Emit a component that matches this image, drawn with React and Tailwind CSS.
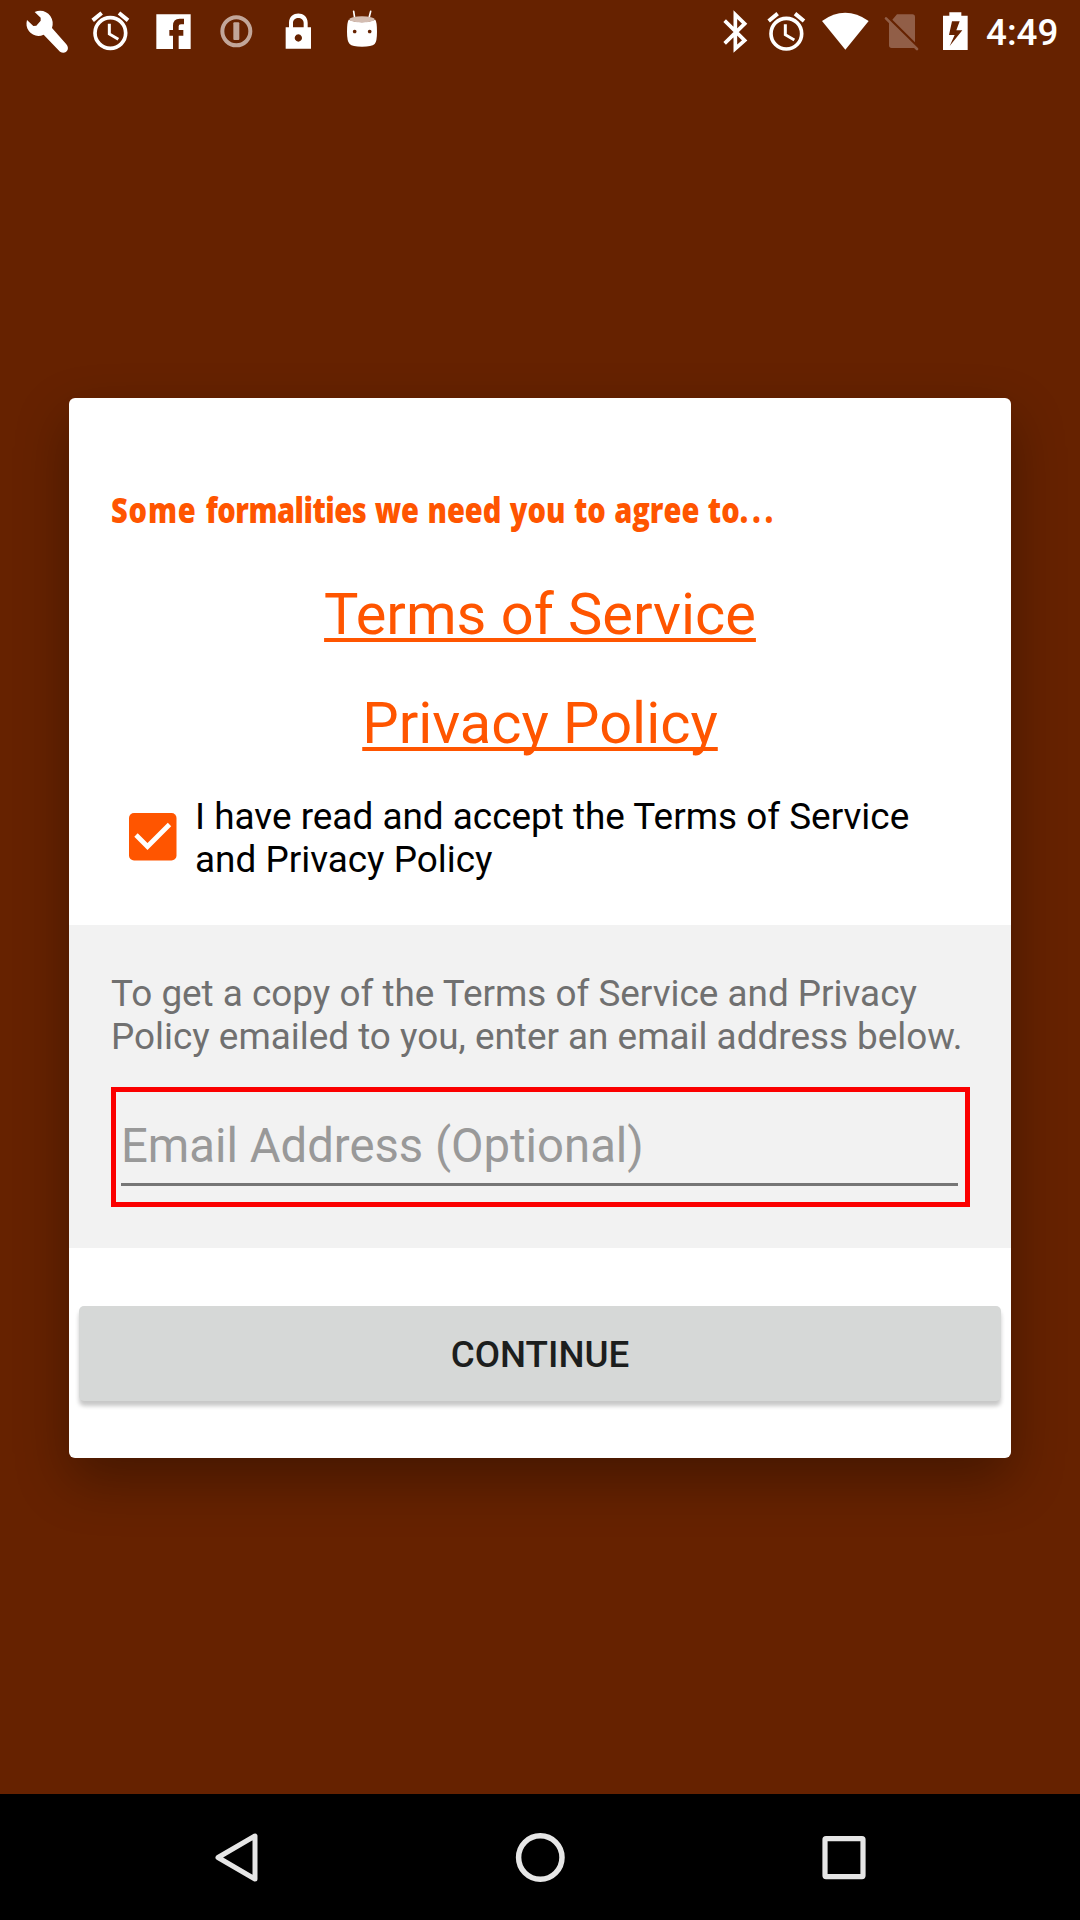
function Slot({ x, w, children }) {
  return (
    <svg width={w} height="64" viewBox={`${x} 0 ${w * 3} 192`} fill="#fff">
      {children}
    </svg>
  );
}

function Alarm({ cx, cy }) {
  return (
    <g transform={`translate(${cx} ${cy})`} fill="none" stroke="#fff">
      <circle r="46" strokeWidth="11" />
      <path d="M-3 -28V3L24 19" strokeWidth="9" />
      <path d="M-53 -38L-26 -60M53 -38L26 -60" strokeWidth="12" />
    </g>
  );
}

function StatusBar() {
  return (
    <header className="flex h-16 w-full justify-between">
      <div className="flex pl-5">
        <Slot x={60} w={60}>
          <path d="M104 36C122 28 141 34 151 48C159 60 160 72 156 84L199 133C212 148 196 166 180 155L131 104C114 112 96 106 87 94C79 83 78 72 81 60L100 78L109 77L122 62L122 53Z" />
        </Slot>
        <Slot x={240} w={60}>
          <Alarm cx={331} cy={99} />
        </Slot>
        <Slot x={420} w={60}>
          <path d="M469 43H572V147H536V107H550V90H536V79Q536 73 543 73H552V56H539Q519 56 519 77V90H508V107H519V147H469Z" />
        </Slot>
        <Slot x={600} w={70}>
          <g opacity="0.6">
            <circle cx="709" cy="94" r="42" fill="none" stroke="#fff" strokeWidth="12" />
            <rect x="700" y="67" width="18" height="53" rx="3" />
          </g>
        </Slot>
        <Slot x={810} w={60}>
          <path
            fillRule="evenodd"
            d="M857 82H867V68C867 31 923 31 923 68V82H933V146H857ZM879 82H911V69C911 49 879 49 879 69ZM895 103a11 11 0 1 0 .1 0Z"
          />
        </Slot>
        <Slot x={990} w={60}>
          <path d="M1064 54L1061 34M1107 54L1112 34" stroke="#fff" strokeWidth="5" strokeLinecap="round" />
          <path
            fillRule="evenodd"
            d="M1046 59Q1086 74 1126 59Q1131 66 1131 95Q1131 125 1124 132Q1115 140 1086 140Q1057 140 1049 132Q1041 125 1041 95Q1041 66 1046 59ZM1064 89a5.500 5.500 0 1 0 .1 0ZM1109 89a5.500 5.500 0 1 0 .1 0Z"
          />
          <ellipse cx="1086" cy="58" rx="38" ry="9" fill="#d3bdb2" />
        </Slot>
      </div>
      <div className="flex pr-[22px]">
        <Slot x={45} w={45}>
          <path d="M74 62L134 121L106 146V44L134 71L74 130" fill="none" stroke="#fff" strokeWidth="11" />
        </Slot>
        <Slot x={180} w={55}>
          <Alarm cx={259} cy={101} />
        </Slot>
        <Slot x={345} w={60}>
          <path d="M366 63Q435 14 506 63L436 149Z" />
        </Slot>
        <Slot x={525} w={55}>
          <g fill="#915e47">
            <path d="M567 66V136Q567 144 575 144H645ZM591 43H637Q645 43 645 51V127L577 59Z" />
            <path d="M558 55L651 147" stroke="#915e47" strokeWidth="8" strokeLinecap="round" />
          </g>
        </Slot>
        <Slot x={690} w={55}>
          <path fillRule="evenodd" d="M729 47H748V37H784V47H803V150H729ZM756 64L747 105H764L749 138L787 91H769L779 64Z" />
        </Slot>
        <div className="w-[73px] pt-[11px] pl-px text-[36.75px] leading-[44px] font-medium whitespace-nowrap text-white">
          4:49
        </div>
      </div>
    </header>
  );
}

function NavBar() {
  return (
    <nav className="flex h-[126px] w-full items-start justify-between bg-black px-[206px] pt-[29px]">
      <svg width="62" height="70" viewBox="0 0 62 70" fill="none" stroke="#e6e6e6" strokeWidth="5" strokeLinejoin="round">
        <path d="M49 13V56L12 34.500Z" />
      </svg>
      <svg width="70" height="70" viewBox="0 0 70 70" fill="none" stroke="#e6e6e6" strokeWidth="5.500">
        <circle cx="35.300" cy="34.500" r="21.700" />
      </svg>
      <svg width="62" height="70" viewBox="0 0 62 70" fill="none" stroke="#e6e6e6" strokeWidth="5.200">
        <rect x="13" y="15.600" width="38" height="38" rx="1" />
      </svg>
    </nav>
  );
}

const linkClass =
  "text-[57.75px] leading-[68px] text-[#ff5500] underline decoration-[4px] underline-offset-[4px] [text-decoration-skip-ink:none]";

export default function App() {
  return (
    <div className="flex h-[1920px] w-[1080px] flex-col overflow-hidden bg-[#662200] font-['Roboto',sans-serif]">
      <StatusBar />
      <main className="flex flex-1 flex-col items-center pt-[334px]">
        <section className="flex h-[1060px] w-[942px] flex-col rounded-[6px] bg-white shadow-[0_22px_54px_rgba(0,0,0,0.32)]">
          <div className="flex h-[527px] shrink-0 flex-col items-center pt-[87px]">
            <h1 className="h-[95px] w-full pl-[42px] font-['Open_Sans',sans-serif] text-[35px] leading-[49px] font-extrabold whitespace-nowrap text-[#ff5500]">
              <span className="inline-block origin-left scale-x-[0.83] [word-spacing:1px]">
                <span className="tracking-[1px]">Some </span>
                <span className="tracking-[-0.6px]">formalities</span> we need you to agree to
                <span className="tracking-[5px]">...</span>
              </span>
            </h1>
            <a className={linkClass}>Terms of Service</a>
            <a className={`mt-[41px] ${linkClass}`}>Privacy Policy</a>
            <label className="mt-[38px] flex w-full pl-[60px] text-[36.9px] leading-[43px] text-black">
              <svg width="48" height="48" viewBox="0 0 48 48" className="mt-[18px] mr-[18px] shrink-0">
                <rect width="47.500" height="47.500" rx="5" fill="#ff5500" />
                <path d="M7 22L18.500 33.500L40.500 11.500" fill="none" stroke="#fff" strokeWidth="4.800" />
              </svg>
              <span>
                I have read and accept the Terms of Service
                <br />
                and Privacy Policy
              </span>
            </label>
          </div>
          <div className="flex h-[323px] shrink-0 flex-col bg-[#f2f2f2] pt-[47px] pr-[41px] pl-[42px]">
            <p className="text-[36.87px] leading-[43px] whitespace-nowrap text-[#707070]">
              To get a copy of the Terms of Service and Privacy
              <br />
              Policy emailed to you, enter an email address below.
            </p>
            <div className="mt-[29px] h-[120px] border-[5px] border-[#fb0000] pt-[26px] pr-[7px] pl-[5px]">
              <input
                className="block h-[68px] w-full border-b-[3px] border-[#767676] bg-transparent pb-[10px] text-[47.25px] leading-[55px] outline-none placeholder:text-[#999999]"
                placeholder="Email Address (Optional)"
              />
            </div>
          </div>
          <button className="mx-[10px] mt-[58px] h-[95px] shrink-0 rounded-[5px] bg-[#d6d8d7] pt-[2px] text-[36.75px] leading-[43px] font-medium text-[#1c1e1d] shadow-[0_5px_4px_rgba(0,0,0,0.22)]">
            CONTINUE
          </button>
        </section>
      </main>
      <NavBar />
    </div>
  );
}
